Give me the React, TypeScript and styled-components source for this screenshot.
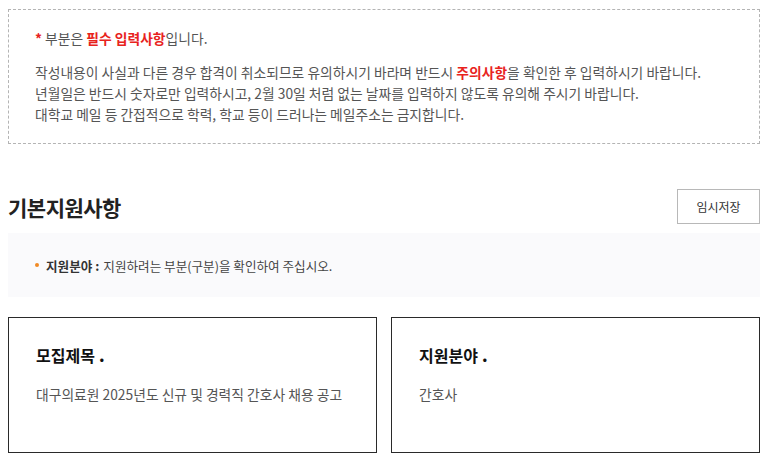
import styled, { createGlobalStyle } from "styled-components";

const GlobalStyle = createGlobalStyle`
  * {
    box-sizing: border-box;
  }

  body {
    margin: 0;
    background: #ffffff;
    font-family: "Noto Sans CJK KR", "Noto Sans", sans-serif;
    color: #333333;
  }
`;

const notices = [
  "년월일은 반드시 숫자로만 입력하시고, 2월 30일 처럼 없는 날짜를 입력하지 않도록 유의해 주시기 바랍니다.",
  "대학교 메일 등 간접적으로 학력, 학교 등이 드러나는 메일주소는 금지합니다.",
];

const cards = [
  { title: "모집제목", value: "대구의료원 2025년도 신규 및 경력직 간호사 채용 공고" },
  { title: "지원분야", value: "간호사" },
];

const App = () => {
  return (
    <>
      <GlobalStyle />
      <Page>
        <NoticeBox>
          <Required>
            <Red>*</Red> 부분은 <Red>필수 입력사항</Red>입니다.
          </Required>
          <NoticeList>
            <p>
              작성내용이 사실과 다른 경우 합격이 취소되므로 유의하시기 바라며 반드시 <Red>주의사항</Red>을 확인한 후
              입력하시기 바랍니다.
            </p>
            {notices.map((text) => (
              <p key={text}>{text}</p>
            ))}
          </NoticeList>
        </NoticeBox>

        <SectionHeader>
          <Title>기본지원사항</Title>
          <SaveButton>임시저장</SaveButton>
        </SectionHeader>

        <InfoBox>
          <InfoItem>
            <strong>지원분야 :</strong> 지원하려는 부분(구분)을 확인하여 주십시오.
          </InfoItem>
        </InfoBox>

        <CardGrid>
          {cards.map((card) => (
            <Card key={card.title}>
              <CardTitle>
                {card.title}
                <Dot>.</Dot>
              </CardTitle>
              <CardValue>{card.value}</CardValue>
            </Card>
          ))}
        </CardGrid>
      </Page>
    </>
  );
};

const Page = styled.main`
  display: flex;
  flex-direction: column;
  padding: 9px 8px 10px;
  width: 768px;
`;

const NoticeBox = styled.section`
  display: flex;
  flex-direction: column;
  gap: 13px;

  height: 135px;
  padding: 18px 26px;

  border: 1px dashed #b4b4b4;
  font-size: 13.8px;
  line-height: 21px;
  color: #555555;
`;

const Red = styled.span`
  color: #e8231d;
  font-weight: 700;
`;

const Required = styled.p`
  margin: 0;
`;

const NoticeList = styled.div`
  & > p {
    margin: 0;
  }
`;

const SectionHeader = styled.div`
  display: flex;
  justify-content: space-between;
  align-items: center;

  margin-top: 45px;
`;

const Title = styled.h2`
  margin: 0;
  font-size: 21px;
  font-weight: 700;
  color: #222222;
  letter-spacing: -0.5px;
`;

const SaveButton = styled.button`
  width: 83px;
  height: 35px;

  border: 1px solid #b8b8b8;
  background: #ffffff;

  font-family: inherit;
  font-size: 12px;
  color: #333333;
  cursor: pointer;
`;

const InfoBox = styled.section`
  display: flex;
  align-items: center;

  height: 64px;
  margin-top: 9px;
  padding: 0 27px;

  background: #fafafc;
`;

const InfoItem = styled.p`
  display: flex;
  align-items: center;
  gap: 4px;

  margin: 0;
  font-size: 12.6px;
  color: #444444;

  &::before {
    content: "";
    width: 4px;
    height: 4px;
    margin-right: 3px;
    border-radius: 50%;
    background: #f08a24;
  }

  & > strong {
    font-weight: 700;
    color: #333333;
  }
`;

const CardGrid = styled.div`
  display: grid;
  grid-template-columns: 369px 1fr;
  gap: 14px;

  margin-top: 20px;
`;

const Card = styled.section`
  height: 136px;
  padding: 24px 27px;

  border: 1.5px solid #2a2a2a;
  background: #ffffff;
`;

const CardTitle = styled.h3`
  margin: 0;
  font-size: 16px;
  line-height: 26px;
  font-weight: 700;
  color: #111111;
`;

const Dot = styled.span`
  margin-left: 4px;
  font-weight: 900;
`;

const CardValue = styled.p`
  margin: 16px 0 0;
  font-size: 13.8px;
  line-height: 20px;
  color: #555555;
`;

export default App;
